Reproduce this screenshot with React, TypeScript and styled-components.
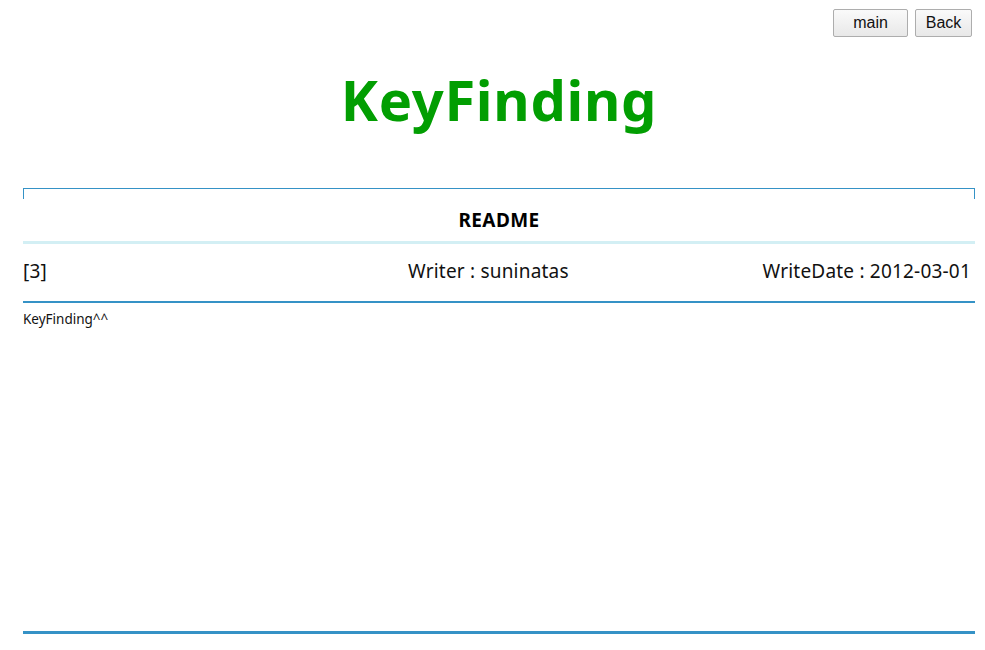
import styled, { createGlobalStyle } from "styled-components"

const GlobalStyle = createGlobalStyle`
	html, body {
		margin: 0;
		padding: 0;
		background: #ffffff;
	}
	body {
		font-family: "Noto Sans", "Open Sans", sans-serif;
		color: #111111;
	}
`

const blue = "#3592c6"
const lightBlue = "#d3eff4"

export default function App() {
	return (
		<>
			<GlobalStyle />
			<Page>
				<TopBar>
					<NavButton $width={75}>main</NavButton>
					<NavButton $width={57}>Back</NavButton>
				</TopBar>

				<Main>
					<Title>KeyFinding</Title>

					<TopFrame />
					<Subject>README</Subject>
					<Rule $color={lightBlue} $size={3} />
					<InfoRow>
						<span>[3]</span>
						<span>Writer : suninatas</span>
						<RightCell>WriteDate : 2012-03-01</RightCell>
					</InfoRow>
					<Rule $color={blue} $size={2} />
					<Content>KeyFinding^^</Content>
					<Rule $color={blue} $size={3} />
				</Main>
			</Page>
		</>
	)
}

const Page = styled.div`
	width: 985px;
	display: flex;
	flex-direction: column;
`

const TopBar = styled.div`
	display: flex;
	justify-content: flex-end;
	gap: 7px;
	padding: 9px 13px 0 0;
`

const NavButton = styled.button<{ $width: number }>`
	width: ${(p) => p.$width}px;
	height: 28px;
	padding: 0;
	font-family: "Liberation Sans", Arial, sans-serif;
	font-size: 16px;
	color: #111;
	background: linear-gradient(#fafafa, #e8e8e8);
	border: 1px solid #adadad;
	border-radius: 2px;
	cursor: pointer;
`

const Main = styled.div`
	margin: 0 10px 0 23px;
	display: flex;
	flex-direction: column;
`

const Title = styled.h1`
	margin: 20px 0 0;
	height: 131px;
	text-align: center;
	font-size: 56px;
	font-weight: 700;
	line-height: 84px;
	color: #029e02;
	letter-spacing: 0.7px;
`

const TopFrame = styled.div`
	height: 10px;
	border: 1px solid ${blue};
	border-bottom: none;
`

const Subject = styled.div`
	height: 42px;
	display: flex;
	align-items: center;
	justify-content: center;
	font-size: 19px;
	font-weight: 700;
	letter-spacing: 0.4px;
	color: #000;
`

const Rule = styled.div<{ $color: string; $size: number }>`
	height: ${(p) => p.$size}px;
	background: ${(p) => p.$color};
`

const InfoRow = styled.div`
	height: 57px;
	box-sizing: border-box;
	padding-bottom: 4px;
	display: grid;
	grid-template-columns: 385px auto 1fr;
	align-items: center;
	font-size: 19px;
	letter-spacing: 0.2px;
	color: #111;
`

const RightCell = styled.span`
	text-align: right;
	padding-right: 4px;
`

const Content = styled.div`
	height: 328px;
	padding-top: 7px;
	box-sizing: border-box;
	font-size: 13.5px;
	color: #111;
`
